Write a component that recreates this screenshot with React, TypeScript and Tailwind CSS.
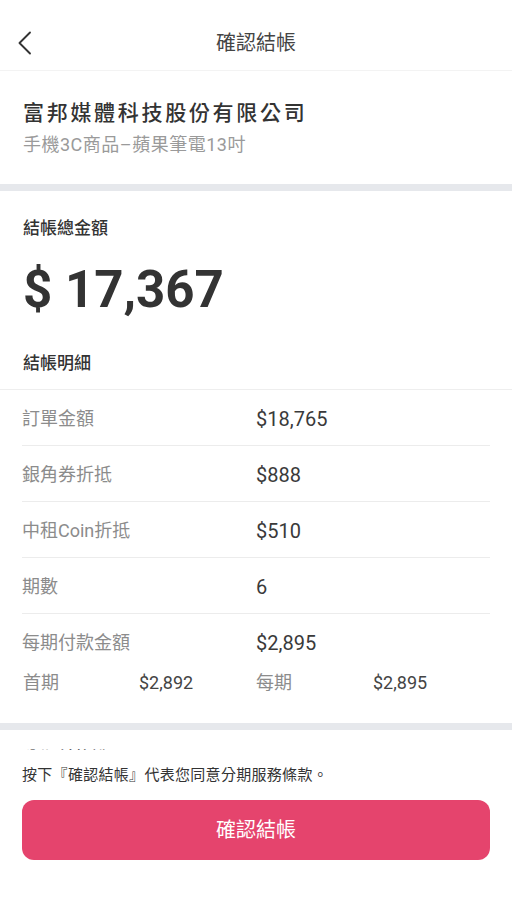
type DetailRow = {
  label: string;
  value: string;
};

const detailRows: DetailRow[] = [
  { label: '訂單金額', value: '$18,765' },
  { label: '銀角券折抵', value: '$888' },
  { label: '中租Coin折抵', value: '$510' },
  { label: '期數', value: '6' },
];

export default function App() {
  return (
    <div className="flex h-screen flex-col bg-white font-['Roboto','Noto_Sans_CJK_TC',sans-serif] text-[#333]">
      <div className="min-h-0 flex-1 overflow-hidden">
        {/* header */}
        <div className="grid h-[71px] grid-cols-[60px_1fr_60px] items-center border-b border-[#f3f3f3] pt-[15px]">
          <button className="flex items-center pl-[16px] text-[#333]">
            <svg width="18" height="26" viewBox="0 0 18 26" fill="none">
              <path d="M14 2.5L3.5 13L14 23.5" stroke="currentColor" strokeWidth="1.9" strokeLinecap="round" strokeLinejoin="round" />
            </svg>
          </button>
          <h1 className="text-center text-[20px] leading-[28px] text-[#444]">確認結帳</h1>
          <div />
        </div>

        {/* merchant */}
        <div className="px-[23px] pb-[27px] pt-[27px]">
          <p className="text-[21px] font-medium leading-[30px] tracking-[2.7px] text-[#333]">
            富邦媒體科技股份有限公司
          </p>
          <p className="mt-[5px] text-[18px] leading-[24px] tracking-[0.5px] text-[#9a9a9a]">手機3C商品–蘋果筆電13吋</p>
        </div>

        <div className="h-[7px] bg-[#e6e8ec]" />

        {/* total */}
        <div className="border-b border-[#eeeeee] px-[23px] pb-[14px] pt-[25px]">
          <p className="text-[17px] font-medium leading-[24px] text-[#333]">結帳總金額</p>
          <p className="mt-[20px] text-[51px] font-bold leading-[60px] text-[#333]">$ 17,367</p>
          <p className="mt-[31px] text-[17px] font-medium leading-[24px] text-[#333]">結帳明細</p>
        </div>

        {/* detail rows */}
        <div className="px-[22px]">
          {detailRows.map((row) => (
            <div key={row.label} className="grid h-[56px] grid-cols-2 items-center border-b border-[#ececec] pt-[3px]">
              <span className="text-[18px] leading-[26px] text-[#8c8c8c]">{row.label}</span>
              <span className="text-[20px] leading-[26px] text-[#3a3a3a]">{row.value}</span>
            </div>
          ))}
          <div className="pb-[28px] pt-[15px]">
            <div className="grid grid-cols-2 items-center">
              <span className="text-[18px] leading-[28px] text-[#8c8c8c]">每期付款金額</span>
              <span className="text-[20px] leading-[28px] text-[#3a3a3a]">$2,895</span>
            </div>
            <div className="mt-[14px] grid grid-cols-4 items-center text-[18px] leading-[24px]">
              <span className="pl-[1px] text-[#8c8c8c]">首期</span>
              <span className="text-[#444]">$2,892</span>
              <span className="text-[#8c8c8c]">每期</span>
              <span className="text-[#444]">$2,895</span>
            </div>
          </div>
        </div>

        <div className="h-[7px] bg-[#e6e8ec]" />

        {/* installment terms, cut off by the footer */}
        <div className="px-[23px] pt-[16px]">
          <p className="text-[17px] font-medium leading-[24px] text-[#333]">分期付款說明</p>
        </div>
      </div>

      {/* footer */}
      <div className="h-[160px] shrink-0 bg-white px-[22px] pt-[14px]">
        <p className="text-[15px] leading-[22px] tracking-[0.3px] text-[#333]">
          按下『確認結帳』代表您同意分期服務條款。
        </p>
        <button className="mt-[14px] flex h-[60px] w-full items-center justify-center rounded-[12px] bg-[#e5446d] text-[20px] text-white">
          確認結帳
        </button>
      </div>
    </div>
  );
}
